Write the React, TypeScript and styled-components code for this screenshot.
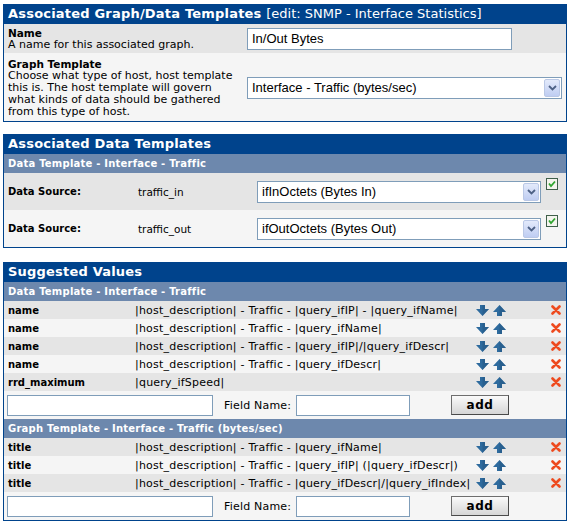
import React from 'react';
import styled, {createGlobalStyle} from "styled-components";

const GlobalStyle = createGlobalStyle`
  body {
    margin: 0;
    background: #ffffff;
    font-family: "DejaVu Sans", Verdana, sans-serif;
    color: #000000;
  }
`

type SuggestedRow = { name: string; value: string };

const dataRows: SuggestedRow[] = [
    {name: "name", value: "|host_description| - Traffic - |query_ifIP| - |query_ifName|"},
    {name: "name", value: "|host_description| - Traffic - |query_ifName|"},
    {name: "name", value: "|host_description| - Traffic - |query_ifIP|/|query_ifDescr|"},
    {name: "name", value: "|host_description| - Traffic - |query_ifDescr|"},
    {name: "rrd_maximum", value: "|query_ifSpeed|"},
];

const graphRows: SuggestedRow[] = [
    {name: "title", value: "|host_description| - Traffic - |query_ifName|"},
    {name: "title", value: "|host_description| - Traffic - |query_ifIP| (|query_ifDescr|)"},
    {name: "title", value: "|host_description| - Traffic - |query_ifDescr|/|query_ifIndex|"},
];

const Chevron = () => (
    <svg width="9" height="6" viewBox="0 0 9 6">
        <path d="M1 1 L4.5 4.5 L8 1" fill="none" stroke="#4D6185" strokeWidth="1.8"/>
    </svg>
);

const Select = (props: { value: string; width: number }) => (
    <SelectBox style={{width: props.width}}>
        <SelectText>{props.value}</SelectText>
        <DropButton><Chevron/></DropButton>
    </SelectBox>
);

const CheckIcon = () => (
    <CheckBox width="12" height="12" viewBox="0 0 12 12">
        <rect x="0.5" y="0.5" width="11" height="11" fill="#F4F4EE" stroke="#3F5F4A"/>
        <path d="M3 5.5 L5 8 L9 3.5" fill="none" stroke="#2FA52F" strokeWidth="1.8"/>
    </CheckBox>
);

const ArrowDown = () => (
    <svg width="13" height="11" viewBox="0 0 13 11">
        <path d="M4 0 H9 V4 H13 L6.5 11 L0 4 H4 Z" fill="#2E6B9E"/>
        <path d="M6.5 11 L13 4 H9 V0 H6.5 Z" fill="#23567F" opacity="0.5"/>
    </svg>
);

const ArrowUp = () => (
    <svg width="13" height="11" viewBox="0 0 13 11">
        <path d="M4 11 H9 V7 H13 L6.5 0 L0 7 H4 Z" fill="#2E6B9E"/>
        <path d="M6.5 0 L13 7 H9 V11 H6.5 Z" fill="#23567F" opacity="0.5"/>
    </svg>
);

const DeleteIcon = () => (
    <svg width="10" height="10" viewBox="0 0 10 10">
        <path d="M1.5 1.5 L8.5 8.5 M8.5 1.5 L1.5 8.5" stroke="#EE4A1E" strokeWidth="2.6" strokeLinecap="round"/>
    </svg>
);

const Suggested = (props: { rows: SuggestedRow[] }) => (
    <>
        {props.rows.map((r, i) => (
            <ValueRow key={i} shade={i % 2 === 0 ? "dark" : "light"}>
                <FieldName>{r.name}</FieldName>
                <FieldValue>{r.value}</FieldValue>
                <Arrows><ArrowDown/><ArrowUp/></Arrows>
                <Remove><DeleteIcon/></Remove>
            </ValueRow>
        ))}
        <AddRow>
            <TextInput style={{width: 206}}/>
            <AddLabel>Field Name:</AddLabel>
            <TextInput style={{width: 114}}/>
            <AddButton>add</AddButton>
        </AddRow>
    </>
);

export default function App() {
    return (
        <Page>
            <GlobalStyle/>
            <Box>
                <Header>Associated Graph/Data Templates <Edit>[edit: SNMP - Interface Statistics]</Edit></Header>
                <FormRow shade="dark">
                    <Label>
                        <b>Name</b>
                        <span>A name for this associated graph.</span>
                    </Label>
                    <NameInput>In/Out Bytes</NameInput>
                </FormRow>
                <FormRow shade="light" tall>
                    <Label>
                        <b>Graph Template</b>
                        <span>Choose what type of host, host template<br/>this is. The host template will govern<br/>what kinds of data should be gathered<br/>from this type of host.</span>
                    </Label>
                    <Select value="Interface - Traffic (bytes/sec)" width={315}/>
                </FormRow>
            </Box>

            <Box>
                <Header>Associated Data Templates</Header>
                <SubHeader>Data Template - Interface - Traffic</SubHeader>
                <SourceRow shade="dark">
                    <SourceLabel>Data Source:</SourceLabel>
                    <SourceName>traffic_in</SourceName>
                    <Select value="ifInOctets (Bytes In)" width={284}/>
                    <CheckIcon/>
                </SourceRow>
                <SourceRow shade="light">
                    <SourceLabel>Data Source:</SourceLabel>
                    <SourceName>traffic_out</SourceName>
                    <Select value="ifOutOctets (Bytes Out)" width={284}/>
                    <CheckIcon/>
                </SourceRow>
            </Box>

            <Box style={{marginTop: 2}}>
                <Header>Suggested Values</Header>
                <SubHeader>Data Template - Interface - Traffic</SubHeader>
                <Suggested rows={dataRows}/>
                <SubHeader>Graph Template - Interface - Traffic (bytes/sec)</SubHeader>
                <Suggested rows={graphRows}/>
            </Box>
        </Page>
    );
}

type Shade = { shade: "dark" | "light" };

const Page = styled.div`
  padding: 4px 3px 0;
  width: 564px;
  display: flex;
  flex-direction: column;
  gap: 12px;
`

const Box = styled.div`
  border: 1px solid #00438C;
  border-top: none;
  background: #F5F5F5;
`

const Header = styled.div`
  background: #00438C;
  color: #ffffff;
  height: 20px;
  line-height: 20px;
  padding-left: 4px;
  font-size: 13px;
  letter-spacing: 0.2px;
  font-weight: bold;
  white-space: nowrap;
`

const Edit = styled.span`
  font-weight: normal;
  letter-spacing: 0;
`

const SubHeader = styled.div`
  background: #6D88AD;
  color: #ffffff;
  height: 19px;
  line-height: 19px;
  padding-left: 4px;
  font-size: 10px;
  letter-spacing: 0.22px;
  font-weight: bold;
`

const FormRow = styled.div<Shade & { tall?: boolean }>`
  display: grid;
  grid-template-columns: 243px 1fr;
  align-items: center;
  background: ${p => p.shade === "dark" ? "#E5E5E5" : "#F5F5F5"};
  min-height: ${p => p.tall ? 68 : 29}px;
  padding: ${p => p.tall ? "3px 0 2px" : "0"};
  box-sizing: border-box;
`

const Label = styled.div`
  padding-left: 4px;
  font-size: 11px;
  line-height: 12px;
  display: flex;
  flex-direction: column;
  white-space: nowrap;

  b {
    font-size: 10.5px;
  }
`

const NameInput = styled.div`
  width: 265px;
  height: 22px;
  box-sizing: border-box;
  border: 1px solid #7F9DB9;
  background: #ffffff;
  font-family: "Liberation Sans", Arial, sans-serif;
  font-size: 13px;
  line-height: 20px;
  padding-left: 4px;
`

const SelectBox = styled.div`
  height: 22px;
  box-sizing: border-box;
  border: 1px solid #7F9DB9;
  background: #ffffff;
  display: flex;
  align-items: center;
  justify-content: space-between;
  padding: 1px;
`

const SelectText = styled.span`
  font-family: "Liberation Sans", Arial, sans-serif;
  font-size: 13px;
  padding-left: 3px;
`

const DropButton = styled.div`
  width: 16px;
  height: 18px;
  box-sizing: border-box;
  border: 1px solid #BAC8E6;
  border-radius: 2px;
  background: linear-gradient(#E3EAFB, #BFCDF2);
  display: flex;
  align-items: center;
  justify-content: center;
`

const SourceRow = styled.div<Shade>`
  display: grid;
  grid-template-columns: 130px 123px 289px 12px;
  align-items: center;
  height: 37px;
  background: ${p => p.shade === "dark" ? "#E5E5E5" : "#F5F5F5"};
`

const SourceLabel = styled.b`
  padding-left: 4px;
  font-size: 10px;
`

const SourceName = styled.span`
  padding-left: 4px;
  font-size: 10.5px;
`

const CheckBox = styled.svg`
  align-self: start;
  margin-top: 5px;
`

const ValueRow = styled.div<Shade>`
  display: grid;
  grid-template-columns: 131px 341px 40px 1fr;
  align-items: center;
  height: 18px;
  background: ${p => p.shade === "dark" ? "#E5E5E5" : "#F5F5F5"};
  font-size: 10px;
`

const FieldName = styled.b`
  padding-left: 4px;
`

const FieldValue = styled.span`
  white-space: nowrap;
  font-size: 11px;
  letter-spacing: 0.22px;
`

const Arrows = styled.div`
  display: flex;
  gap: 4px;
`

const Remove = styled.div`
  display: flex;
  justify-content: flex-end;
  padding-right: 5px;
`

const AddRow = styled.div`
  display: flex;
  align-items: center;
  height: 28px;
  padding-left: 3px;
  background: #F5F5F5;
  font-size: 11px;
`

const TextInput = styled.div`
  height: 21px;
  box-sizing: border-box;
  border: 1px solid #7F9DB9;
  background: #ffffff;
`

const AddLabel = styled.span`
  width: 72px;
  margin-left: 11px;
  letter-spacing: 0.2px;
`

const AddButton = styled.div`
  margin-left: 41px;
  width: 58px;
  height: 20px;
  box-sizing: border-box;
  border: 1px solid #6E6E6E;
  border-right-color: #4A4A4A;
  border-bottom-color: #4A4A4A;
  background: linear-gradient(#FAFAFA, #D6D6D6);
  font-size: 12px;
  font-weight: bold;
  letter-spacing: 0.5px;
  text-align: center;
  line-height: 18px;
`
